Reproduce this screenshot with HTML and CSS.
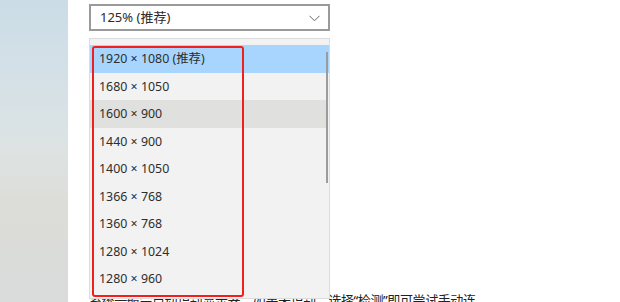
FILE: index.html
```html
<!DOCTYPE html>
<html lang="zh-CN">
<head>
<meta charset="utf-8">
<link rel="stylesheet" href="styles.css">
</head>
<body>
<div class="page">
  <aside class="side"></aside>
  <main class="main">
    <div class="select">
      <span class="select-text">125% (推荐)</span>
      <svg class="chev" width="11" height="7" viewBox="0 0 11 7"><path d="M0.5 0.8 L5.5 5.8 L10.5 0.8" fill="none" stroke="#666" stroke-width="1"/></svg>
    </div>
    <div class="wrap">
      <div class="list">
        <div class="item sel">1920 × 1080 (推荐)</div>
        <div class="item">1680 × 1050</div>
        <div class="item hover">1600 × 900</div>
        <div class="item">1440 × 900</div>
        <div class="item">1400 × 1050</div>
        <div class="item">1366 × 768</div>
        <div class="item">1360 × 768</div>
        <div class="item">1280 × 1024</div>
        <div class="item">1280 × 960</div>
        <div class="scroll"></div>
        <div class="mark"></div>
      </div>
      <p class="desc">系统一般会自动识别显示器，如果未识别，选择“检测”即可尝试手动连</p>
    </div>
  </main>
</div>
</body>
</html>
```

FILE: styles.css
```css
html, body {
  margin: 0;
  padding: 0;
  background: #ffffff;
  font-family: "Noto Sans", "Noto Sans CJK SC", sans-serif;
  overflow: hidden;
}
.page {
  display: flex;
  width: 620px;
  height: 302px;
}
.side {
  width: 68px;
  flex: none;
  background: linear-gradient(to bottom, #cbdce6 0%, #d6e1e6 30%, #dde3e2 50%, #dcdcd8 70%, #d9dcdb 100%);
}
.main {
  flex: 1;
  padding-left: 21px;
  padding-top: 4px;
  box-sizing: border-box;
}
.select {
  width: 241px;
  height: 27px;
  box-sizing: border-box;
  border: 2px solid #9a9a9a;
  background: #fff;
  display: flex;
  align-items: center;
  justify-content: space-between;
  padding: 0 8px 0 9px;
  font-size: 13px;
  color: #2a2a2a;
}
.select-text { line-height: 1; }
.chev { margin-top: 1px; }
.wrap {
  position: relative;
  margin-top: 7px;
}
.list {
  position: relative;
  z-index: 2;
  width: 241px;
  height: 261px;
  box-sizing: border-box;
  background: #f2f2f2;
  border: 1px solid #dcdcdc;
  padding-top: 6px;
}
.item {
  height: 27.5px;
  line-height: 27.5px;
  padding-left: 9px;
  font-size: 12.4px;
  color: #2e2e2e;
  margin-right: 3px;
}
.item.sel {
  background: #a8d5fd;
  margin-right: 0;
}
.item.hover {
  background: #e0e0df;
}
.scroll {
  position: absolute;
  right: 1px;
  top: 13px;
  width: 2px;
  height: 131px;
  background: #9c9c9c;
}
.mark {
  position: absolute;
  left: 2px;
  top: 7px;
  width: 152px;
  height: 251px;
  box-sizing: border-box;
  border: 2px solid #f0201e;
  border-radius: 3px;
}
.desc {
  position: absolute;
  left: 0;
  top: 252px;
  margin: 0;
  white-space: nowrap;
  font-size: 13px;
  letter-spacing: -0.4px;
  color: #222;
  z-index: 1;
}
```
